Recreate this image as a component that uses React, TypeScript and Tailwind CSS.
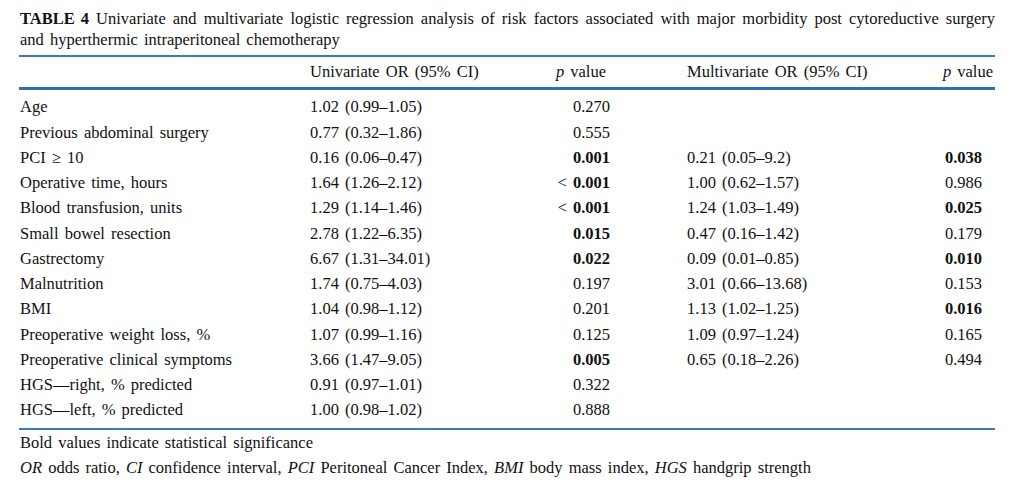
import React from 'react';

type Row = {
  label: React.ReactNode;
  uni: string;
  p1: React.ReactNode;
  multi?: string;
  p2?: React.ReactNode;
};

const B = ({ children }: { children: React.ReactNode }) => <span className="font-bold">{children}</span>;
const Lt = ({ children }: { children: React.ReactNode }) => (
  <>
    &lt; <B>{children}</B>
  </>
);

const rows: Row[] = [
  { label: 'Age', uni: '1.02 (0.99–1.05)', p1: '0.270' },
  { label: 'Previous abdominal surgery', uni: '0.77 (0.32–1.86)', p1: '0.555' },
  { label: 'PCI ≥ 10', uni: '0.16 (0.06–0.47)', p1: <B>0.001</B>, multi: '0.21 (0.05–9.2)', p2: <B>0.038</B> },
  { label: 'Operative time, hours', uni: '1.64 (1.26–2.12)', p1: <Lt>0.001</Lt>, multi: '1.00 (0.62–1.57)', p2: '0.986' },
  { label: 'Blood transfusion, units', uni: '1.29 (1.14–1.46)', p1: <Lt>0.001</Lt>, multi: '1.24 (1.03–1.49)', p2: <B>0.025</B> },
  { label: 'Small bowel resection', uni: '2.78 (1.22–6.35)', p1: <B>0.015</B>, multi: '0.47 (0.16–1.42)', p2: '0.179' },
  { label: 'Gastrectomy', uni: '6.67 (1.31–34.01)', p1: <B>0.022</B>, multi: '0.09 (0.01–0.85)', p2: <B>0.010</B> },
  { label: 'Malnutrition', uni: '1.74 (0.75–4.03)', p1: '0.197', multi: '3.01 (0.66–13.68)', p2: '0.153' },
  { label: 'BMI', uni: '1.04 (0.98–1.12)', p1: '0.201', multi: '1.13 (1.02–1.25)', p2: <B>0.016</B> },
  { label: 'Preoperative weight loss, %', uni: '1.07 (0.99–1.16)', p1: '0.125', multi: '1.09 (0.97–1.24)', p2: '0.165' },
  { label: 'Preoperative clinical symptoms', uni: '3.66 (1.47–9.05)', p1: <B>0.005</B>, multi: '0.65 (0.18–2.26)', p2: '0.494' },
  { label: 'HGS—right, % predicted', uni: '0.91 (0.97–1.01)', p1: '0.322' },
  { label: 'HGS—left, % predicted', uni: '1.00 (0.98–1.02)', p1: '0.888' },
];

const grid = 'grid grid-cols-[291px_230px_70px_292px_93px]';

export default function App() {
  return (
    <div className="w-[1024px] h-[485px] bg-white text-[#111] font-['Liberation_Serif','Times_New_Roman',serif] text-[16.5px] [word-spacing:2px] overflow-hidden">
      <div className="ml-[19px] w-[976px]">
        <p className="pt-[8px] leading-[21px] text-justify pl-[1px]">
          <span className="inline-block font-bold mr-[7px]">TABLE 4</span>Univariate and multivariate logistic regression analysis of risk factors associated with major morbidity post cytoreductive surgery and hyperthermic intraperitoneal chemotherapy
        </p>
        <div className="mt-[5px] h-[2px] bg-[#3a7bb8]" />
        <div className={`${grid} h-[30px] items-center`}>
          <div />
          <div>Univariate OR (95% CI)</div>
          <div className="text-right pr-[4px] whitespace-nowrap">
            <i>p</i> value
          </div>
          <div className="pl-[77px]">Multivariate OR (95% CI)</div>
          <div className="text-right pr-[2px] whitespace-nowrap">
            <i>p</i> value
          </div>
        </div>
        <div className="h-[3px] bg-[#2f70b0]" />
        <div className="pt-[5px] pb-[5px]">
          {rows.map((r, i) => (
            <div key={i} className={`${grid} h-[25.25px] items-center`}>
              <div className="pl-[1px]">{r.label}</div>
              <div>{r.uni}</div>
              <div className="text-right whitespace-nowrap">{r.p1}</div>
              <div className="pl-[77px]">{r.multi}</div>
              <div className="text-right pr-[13px]">{r.p2}</div>
            </div>
          ))}
        </div>
        <div className="h-[2px] bg-[#3a7bb8]" />
        <div className="pl-[1px] h-[26px] flex items-center">Bold values indicate statistical significance</div>
        <div className="pl-[1px] h-[25px] flex items-center">
          <span>
            <i>OR</i> odds ratio, <i>CI</i> confidence interval, <i>PCI</i> Peritoneal Cancer Index, <i>BMI</i> body mass index, <i>HGS</i> handgrip strength
          </span>
        </div>
      </div>
    </div>
  );
}
